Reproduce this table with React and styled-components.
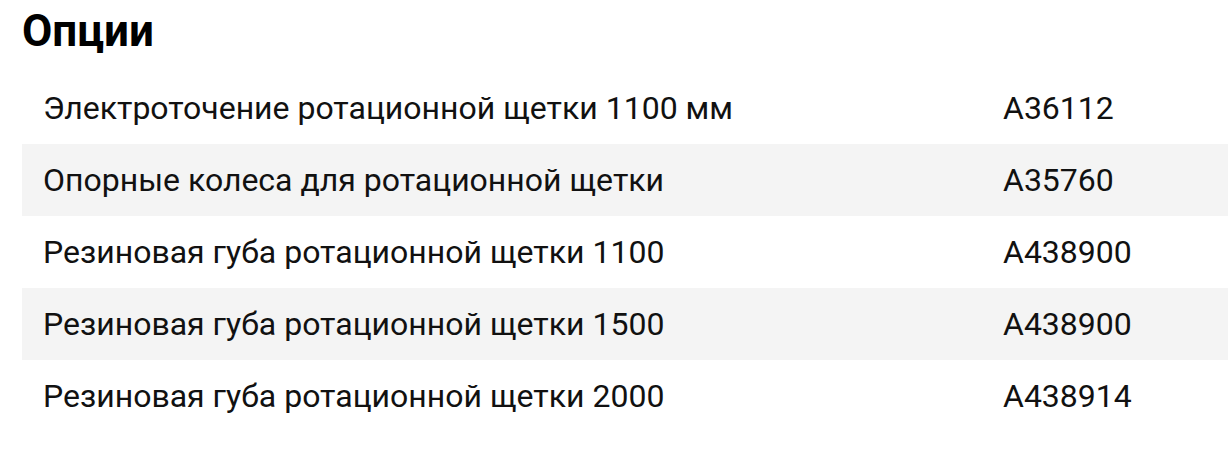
import React from "react";
import styled, { createGlobalStyle } from "styled-components";

const options = [
  { id: 1, title: "Электроточение ротационной щетки 1100 мм", code: "A36112" },
  { id: 2, title: "Опорные колеса для ротационной щетки", code: "A35760" },
  { id: 3, title: "Резиновая губа ротационной щетки 1100", code: "A438900" },
  { id: 4, title: "Резиновая губа ротационной щетки 1500", code: "A438900" },
  { id: 5, title: "Резиновая губа ротационной щетки 2000", code: "A438914" },
];

const Global = createGlobalStyle`
  body {
    margin: 0;
    background: #fff;
    font-family: Roboto, "Liberation Sans", sans-serif;
    color: #111;
  }
`;

export default function App() {
  return (
    <>
      <Global />
      <Section>
        <Title>Опции</Title>
        <Table>
          {options.map((x) => (
            <Row key={x.id} $shaded={x.id % 2 === 0}>
              <Cell>{x.title}</Cell>
              <Cell>{x.code}</Cell>
            </Row>
          ))}
        </Table>
      </Section>
    </>
  );
}

const Section = styled.section`
  padding: 5px 0 0 22px;
`;

const Title = styled.h2`
  margin: 0 0 15px;
  font-size: 44px;
  line-height: 52px;
  font-weight: 700;
  color: #000;
`;

const Table = styled.div`
  display: flex;
  flex-direction: column;
`;

const Row = styled.div`
  display: grid;
  grid-template-columns: 960px 1fr;
  align-items: center;
  height: 72px;
  padding: 0 21px;
  background: ${(p) => (p.$shaded ? "#f4f4f4" : "transparent")};
`;

const Cell = styled.div`
  font-size: 32px;
  line-height: 38px;
  color: #111;
`;
